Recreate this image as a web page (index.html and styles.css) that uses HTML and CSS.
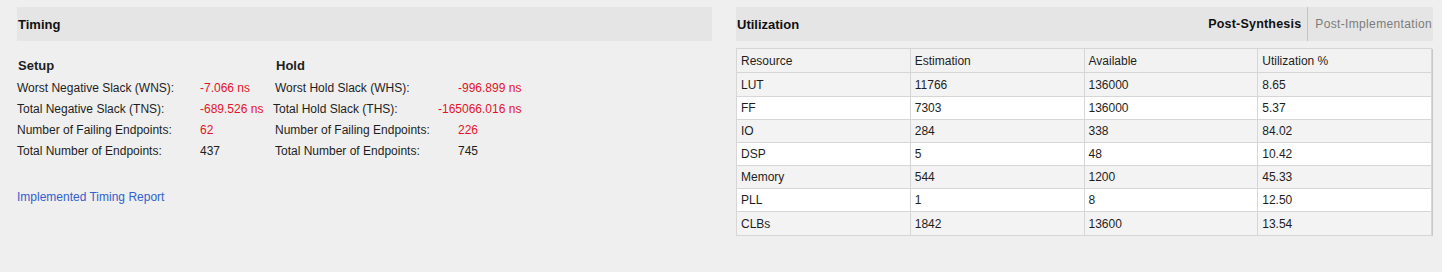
FILE: index.html
```html
<!DOCTYPE html>
<html lang="en">

<head>
    <meta charset="UTF-8">
    <title>Project Summary</title>
    <link rel="stylesheet" href="styles.css">
</head>

<body>
    <div class="summary">
        <div class="panel timing">
            <div class="panel_head">
                <span class="panel_title">Timing</span>
            </div>
            <div class="timing_body">
                <div class="group">
                    <div class="group_title">Setup</div>
                    <div class="row"><span class="lbl">Worst Negative Slack (WNS):</span><span class="val red">-7.066 ns</span></div>
                    <div class="row"><span class="lbl">Total Negative Slack (TNS):</span><span class="val red">-689.526 ns</span></div>
                    <div class="row"><span class="lbl">Number of Failing Endpoints:</span><span class="val red">62</span></div>
                    <div class="row"><span class="lbl">Total Number of Endpoints:</span><span class="val">437</span></div>
                </div>
                <div class="group">
                    <div class="group_title">Hold</div>
                    <div class="row"><span class="lbl">Worst Hold Slack (WHS):</span><span class="val red">-996.899 ns</span></div>
                    <div class="row wide"><span class="lbl">Total Hold Slack (THS):</span><span class="val red">-165066.016 ns</span></div>
                    <div class="row"><span class="lbl">Number of Failing Endpoints:</span><span class="val red">226</span></div>
                    <div class="row"><span class="lbl">Total Number of Endpoints:</span><span class="val">745</span></div>
                </div>
            </div>
            <a class="report_link" href="#">Implemented Timing Report</a>
        </div>

        <div class="panel util">
            <div class="panel_head">
                <span class="panel_title">Utilization</span>
                <div class="tabs">
                    <span class="tab active">Post-Synthesis</span>
                    <span class="tab">Post-Implementation</span>
                </div>
            </div>
            <table class="util_table">
                <thead>
                    <tr><th>Resource</th><th>Estimation</th><th>Available</th><th>Utilization %</th></tr>
                </thead>
                <tbody>
                    <tr><td>LUT</td><td>11766</td><td>136000</td><td>8.65</td></tr>
                    <tr><td>FF</td><td>7303</td><td>136000</td><td>5.37</td></tr>
                    <tr><td>IO</td><td>284</td><td>338</td><td>84.02</td></tr>
                    <tr><td>DSP</td><td>5</td><td>48</td><td>10.42</td></tr>
                    <tr><td>Memory</td><td>544</td><td>1200</td><td>45.33</td></tr>
                    <tr><td>PLL</td><td>1</td><td>8</td><td>12.50</td></tr>
                    <tr><td>CLBs</td><td>1842</td><td>13600</td><td>13.54</td></tr>
                </tbody>
            </table>
        </div>
    </div>
</body>

</html>
```

FILE: styles.css
```css
body {
    margin: 0;
    background-color: #efefef;
    font-family: "Liberation Sans", Arial, sans-serif;
    font-size: 12px;
    color: #1e1e1e;
}

.summary {
    display: flex;
    gap: 24px;
    padding: 7px 0 0 17px;
}

.panel.timing {
    width: 695px;
}

.panel.util {
    width: 697px;
}

.panel_head {
    height: 34px;
    background-color: #e5e5e5;
    display: flex;
    align-items: center;
    justify-content: space-between;
}

.panel_title {
    font-weight: bold;
    font-size: 13px;
    padding-left: 1px;
    color: #111;
}

.tabs {
    display: flex;
    height: 100%;
    align-items: center;
}

.tab {
    color: #7c7c7c;
    letter-spacing: 0.35px;
    padding: 0 1px 0 7px;
    height: 100%;
    display: flex;
    align-items: center;
}

.tab.active {
    font-weight: bold;
    font-size: 12.5px;
    letter-spacing: 0.2px;
    color: #111;
    padding: 0 6px 0 0;
    border-right: 1px solid #c4c4c4;
}

/* timing block */
.timing_body {
    display: flex;
    padding-top: 17px;
}

.group {
    width: 258px;
}

.group_title {
    font-weight: bold;
    font-size: 13px;
    padding-left: 1px;
    height: 16px;
    line-height: 16px;
    margin-bottom: 4px;
}

.row {
    display: flex;
    height: 21px;
    line-height: 21px;
}

.lbl {
    width: 183px;
    flex-shrink: 0;
}

.val {
    white-space: nowrap;
}

.red {
    color: #e3142b;
}

.row.wide .lbl {
    margin-left: -2px;
    width: 165px;
}

.report_link {
    display: inline-block;
    margin-top: 28px;
    color: #3461cc;
    text-decoration: none;
}

/* utilization table */
.util_table {
    margin-top: 7px;
    width: 696px;
    border-collapse: collapse;
    border: 1px solid #8e8e8e;
    box-shadow: 1px 1px 0 #c8c8c8;
    table-layout: fixed;
}

.util_table th,
.util_table td {
    text-align: left;
    font-weight: normal;
    padding: 0 4px;
    height: 22px;
    line-height: 22px;
    border: 1px solid #d6d6d6;
    white-space: nowrap;
}

.util_table th {
    background-color: #f2f2f2;
    height: 23px;
}

.util_table tbody tr:first-child td,
.util_table tbody tr:last-child td {
    height: 23px;
}

.util_table tbody tr:nth-child(odd) td {
    background-color: #f3f3f3;
}

.util_table tbody tr:nth-child(even) td {
    background-color: #ffffff;
}
```
